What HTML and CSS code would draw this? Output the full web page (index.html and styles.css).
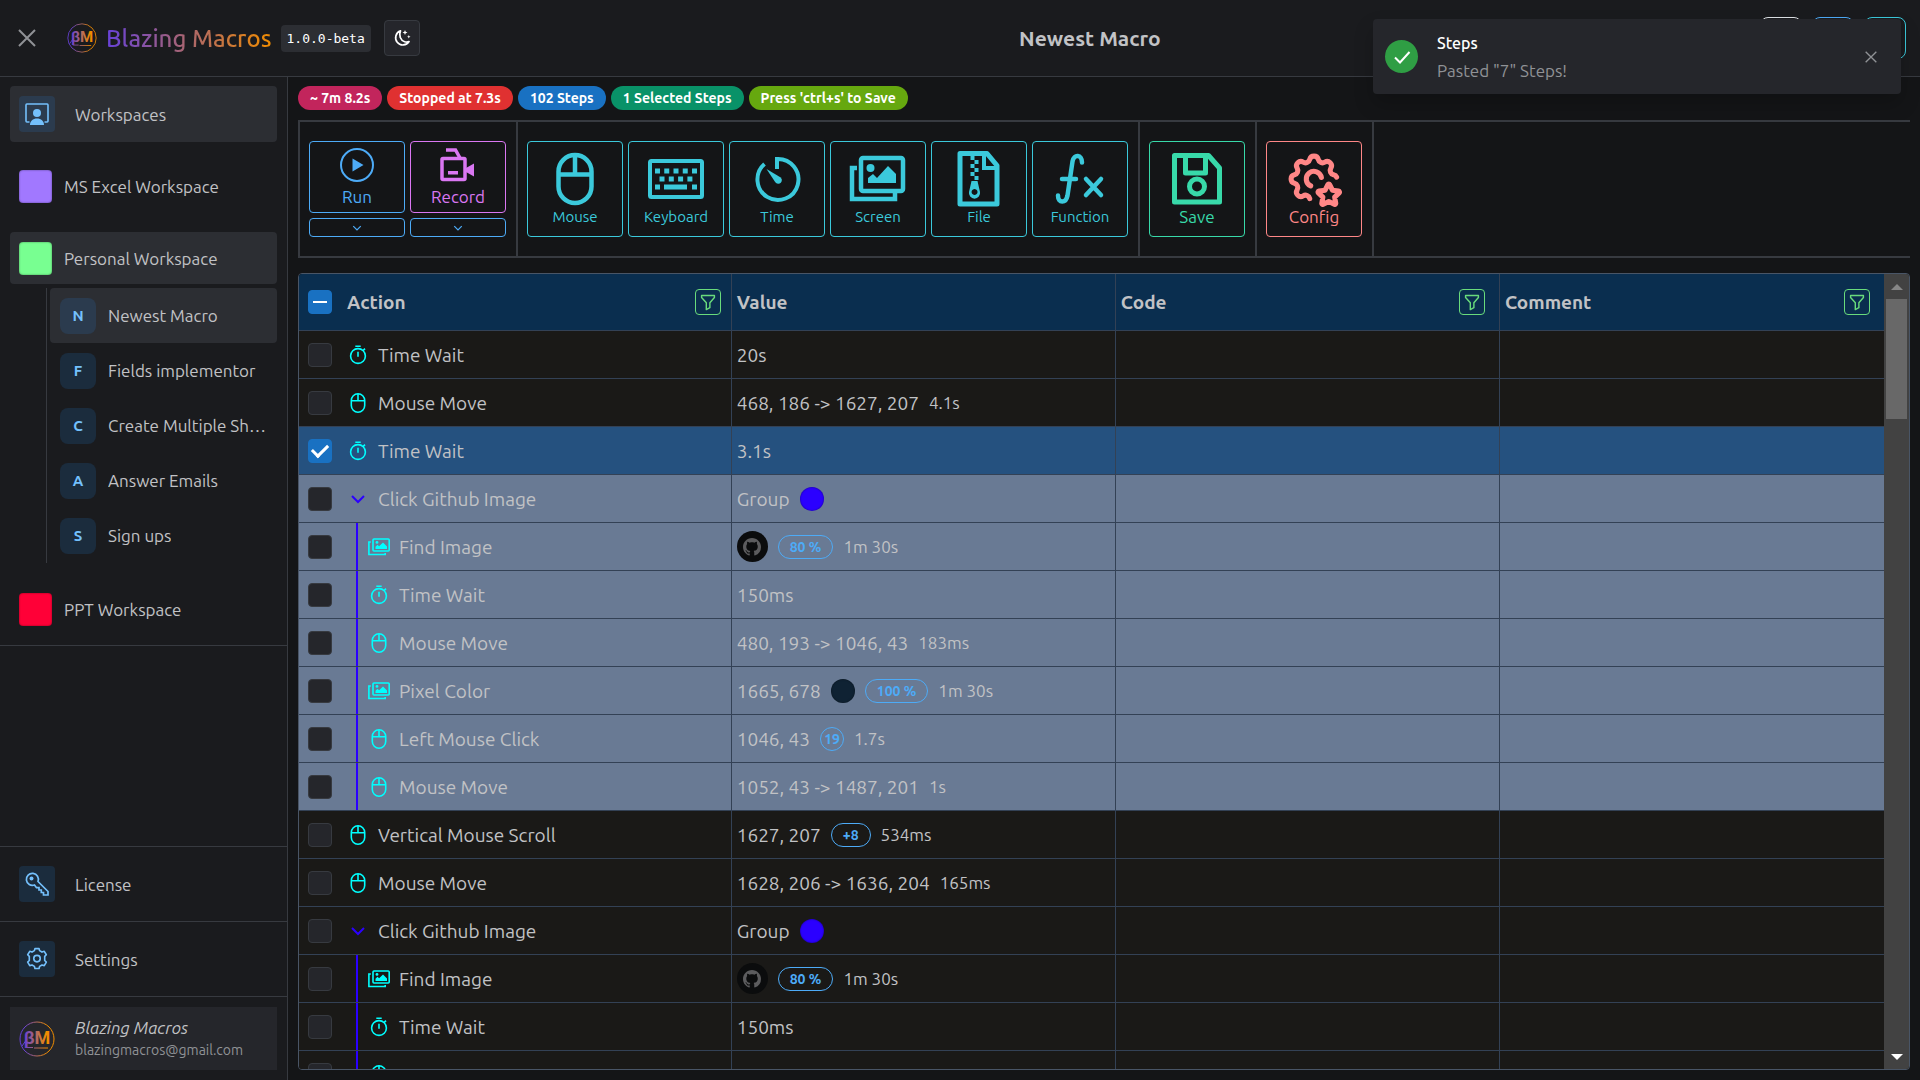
FILE: index.html
```html
<!DOCTYPE html>
<html lang="en">
<head>
  <meta charset="UTF-8" />
  <meta name="viewport" content="width=device-width, initial-scale=1.0"/>
  <title>Blazing Macros</title>
  <link rel="stylesheet" href="styles.css">
</head>
<body>
  <svg class="sprite" aria-hidden="true">
    <defs>
      <linearGradient id="brand-gradient" gradientUnits="userSpaceOnUse" x1="2" y1="0" x2="34" y2="0">
        <stop offset="0.1" stop-color="#6741d9"/>
        <stop offset="0.8" stop-color="#f08c00"/>
      </linearGradient>
    </defs>
    <symbol id="i-close" viewBox="0 0 18 18"><path d="M1 1l16 16M17 1L1 17" fill="none" stroke="currentColor" stroke-width="2"/></symbol>
    <symbol id="i-down" viewBox="0 0 16 16"><path d="M2 5l6 6 6-6" fill="none" stroke="currentColor" stroke-width="2"/></symbol>
    <symbol id="i-mouse" viewBox="0 0 20 20"><g fill="none" stroke="currentColor" stroke-width="1.6"><rect x="3.3" y="0.8" width="13.4" height="18.4" rx="6.7"/><path d="M3.3 7.7h13.4M10 0.8v6.9"/></g></symbol>
    <symbol id="i-watch" viewBox="0 0 20 20"><g fill="none" stroke="currentColor" stroke-width="1.6"><circle cx="10" cy="11" r="7.4"/><path d="M7.3 1.2h5.4M10 6.8v5M15 5.6l2-2"/></g></symbol>
    <symbol id="i-images" viewBox="0 0 22 20"><g fill="none" stroke="currentColor" stroke-width="1.6"><rect x="5" y="2" width="16.2" height="12" rx="1"/><path d="M2.8 5H.9v12.5h16.3v-1.6"/></g><circle cx="9" cy="5.4" r="1.4" fill="currentColor"/><path d="M7.5 12V9.8l2-2 1.6 1.4L15 5.4l4 4V12z" fill="currentColor"/></symbol>
    <symbol id="i-filter" viewBox="0 0 16 18"><path d="M1.2 1.5h13.6v2.2L10 9.3v5.2L6.2 16.5V9.3L1.2 3.7z" fill="none" stroke="currentColor" stroke-width="1.5" stroke-linejoin="round"/></symbol>
    <symbol id="i-github" viewBox="0 0 16 16"><path fill="currentColor" d="M8 0C3.58 0 0 3.58 0 8c0 3.54 2.29 6.53 5.47 7.59.4.07.55-.17.55-.38 0-.19-.01-.82-.01-1.49-2.01.37-2.53-.49-2.69-.94-.09-.23-.48-.94-.82-1.13-.28-.15-.68-.52-.01-.53.63-.01 1.08.58 1.23.82.72 1.21 1.87.87 2.33.66.07-.52.28-.87.51-1.07-1.78-.2-3.64-.89-3.64-3.95 0-.87.31-1.59.82-2.15-.08-.2-.36-1.02.08-2.12 0 0 .67-.21 2.2.82.64-.18 1.32-.27 2-.27s1.36.09 2 .27c1.53-1.04 2.2-.82 2.2-.82.44 1.1.16 1.92.08 2.12.51.56.82 1.27.82 2.15 0 3.07-1.87 3.75-3.65 3.95.29.25.54.73.54 1.48 0 1.07-.01 1.93-.01 2.2 0 .21.15.46.55.38A8.01 8.01 0 0016 8c0-4.42-3.58-8-8-8z"/></symbol>
  </svg>

  <header class="header">
    <div class="header-left">
      <button class="icon-btn" aria-label="Close menu"><svg class="close-lg"><use href="#i-close"/></svg></button>
      <svg class="logo-sm" viewBox="0 0 36 36">
        <circle cx="18" cy="18" r="17" fill="none" stroke="url(#brand-gradient)" stroke-width="1"/>
        <text x="18" y="23" text-anchor="middle" class="logo-text" fill="url(#brand-gradient)">βM</text>
        <path d="M7 26.5h7M15 27h14M3 25l5-7" stroke="url(#brand-gradient)" stroke-width="1" fill="none"/>
      </svg>
      <span class="brand">Blazing Macros</span>
      <code class="version">1.0.0-beta</code>
      <button class="theme-btn" aria-label="Toggle theme">
        <svg viewBox="0 0 18 18" width="18" height="18"><path d="M7.500 1.800a7.300 7.300 0 1 0 8.600 10.800c-1.500.6-3 .6-4.500.1C7.500 11.300 5.500 6.500 7.500 1.800z" fill="none" stroke="currentColor" stroke-width="1.700" stroke-linejoin="round"/><path d="M12 1l.7 1.800 1.800.7-1.800.7L12 6l-.7-1.800-1.800-.7 1.800-.7zM15.800 6l.5 1.200 1.200.5-1.200.5-.5 1.200-.5-1.200-1.200-.5 1.200-.5z" fill="currentColor"/></svg>
      </button>
    </div>
    <h1 class="title">Newest Macro</h1>
    <div class="header-right">
      <button class="win-btn white" aria-label="Minimize"></button>
      <button class="win-btn blue" aria-label="Maximize"></button>
      <button class="win-btn cyan" aria-label="Help"></button>
    </div>
  </header>

  <div class="layout">
    <aside class="sidebar">
      <nav class="nav">
        <button class="nav-item tall active">
          <span class="tile"><svg viewBox="0 0 24 24" width="24" height="24"><path d="M4.500 20H1.900A.9.9 0 0 1 1 19.100V2.900A.9.9 0 0 1 1.900 2h20.200a.9.9 0 0 1 .9.9v16.200a.9.9 0 0 1-.9.9h-2.600" fill="none" stroke="currentColor" stroke-width="1.600"/><circle cx="12" cy="11" r="4" fill="currentColor"/><path d="M5 23c0-4 3-6.500 7-6.500s7 2.500 7 6.500z" fill="currentColor"/></svg></span>
          Workspaces
        </button>
        <button class="nav-item first"><span class="swatch purple"></span>MS Excel Workspace</button>
        <button class="nav-item active"><span class="swatch green"></span>Personal Workspace</button>
        <div class="macros">
          <button class="macro active"><span class="tile round">N</span><span class="macro-name">Newest Macro</span></button>
          <button class="macro"><span class="tile round">F</span><span class="macro-name">Fields implementor</span></button>
          <button class="macro"><span class="tile round">C</span><span class="macro-name">Create Multiple Shortcuts</span></button>
          <button class="macro"><span class="tile round">A</span><span class="macro-name">Answer Emails</span></button>
          <button class="macro"><span class="tile round">S</span><span class="macro-name">Sign ups</span></button>
        </div>
        <button class="nav-item"><span class="swatch red"></span>PPT Workspace</button>
      </nav>

      <div class="side-section">
        <button class="nav-item tall">
          <span class="tile"><svg viewBox="0 0 24 24" width="24" height="24"><path d="M13 9.500L23 19.500V23h-4.500v-2.500h-2.200V18H14v-2.300h-2.500L9.500 13A6 6 0 1 1 13 9.500z" fill="none" stroke="currentColor" stroke-width="1.700"/><circle cx="6.500" cy="6.500" r="2" fill="currentColor"/></svg></span>
          License
        </button>
      </div>
      <div class="side-section">
        <button class="nav-item tall">
          <span class="tile"><svg viewBox="0 0 24 24" width="26" height="26"><g fill="none" stroke="currentColor" stroke-width="1.500" stroke-linejoin="round"><path d="M9.600 4.300L10.100 2.400h3.800l.5 1.900 2.200 1.300 2.100-.7 1.900 3.200-1.500 1.500v3.800l1.500 1.500-1.900 3.200-2.100-.6-2.200 1.300-.5 2h-3.800l-.5-2-2.200-1.300-2.100.6-1.900-3.200 1.500-1.500V9.600L3.400 8.100l1.900-3.200 2.100.7z"/><circle cx="12" cy="11.600" r="3"/></g></svg></span>
          Settings
        </button>
      </div>
      <div class="side-section user-section">
        <div class="user">
          <svg class="logo-lg" viewBox="0 0 36 36">
            <circle cx="18" cy="18" r="17" fill="none" stroke="url(#brand-gradient)" stroke-width="1"/>
            <text x="18" y="23" text-anchor="middle" class="logo-text" fill="url(#brand-gradient)">βM</text>
            <path d="M7 26.500h7M15 27h14M3 25l5-7" stroke="url(#brand-gradient)" stroke-width="1" fill="none"/>
          </svg>
          <div>
            <div class="user-name">Blazing Macros</div>
            <div class="user-mail">blazingmacros@gmail.com</div>
          </div>
        </div>
      </div>
    </aside>

    <main class="main">
      <div class="badges">
        <span class="badge pink">~ 7m 8.2s</span>
        <span class="badge red">Stopped at 7.3s</span>
        <span class="badge blue">102 Steps</span>
        <span class="badge teal">1 Selected Steps</span>
        <span class="badge lime">Press 'ctrl+s' to Save</span>
      </div>

      <div class="toolbar">
        <div class="tools">
          <div class="split">
            <button class="tool run">
              <svg viewBox="0 0 34 34" width="34" height="34"><circle cx="17" cy="17" r="16" fill="none" stroke="currentColor" stroke-width="2"/><path d="M12.500 10.500v13l11-6.500z" fill="currentColor"/></svg>
              Run
            </button>
            <button class="drop" aria-label="Run options"><svg><use href="#i-down"/></svg></button>
          </div>
          <div class="split">
            <button class="tool record">
              <svg viewBox="0 0 38 34" width="38" height="34"><g fill="none" stroke="currentColor" stroke-width="3.500"><rect x="3" y="10.500" width="23" height="21" rx="1"/><path d="M7 2h9.500l4.500 8"/></g><path d="M9 23h10v3.500H9zM27 20l8-4.500v13L27 24z" fill="currentColor"/></svg>
              Record
            </button>
            <button class="drop" aria-label="Record options"><svg><use href="#i-down"/></svg></button>
          </div>
        </div>
        <div class="tools">
          <button class="tool cyan"><svg viewBox="0 0 56 56" width="56" height="56"><g fill="none" stroke="currentColor" stroke-width="4.500"><rect x="11.500" y="4" width="33" height="48" rx="16.500"/><path d="M11.500 23.500h33M28 4v19"/></g></svg>Mouse</button>
          <button class="tool cyan"><svg viewBox="0 0 56 56" width="56" height="56"><rect x="2" y="10" width="52" height="36" rx="1.500" fill="none" stroke="currentColor" stroke-width="4"/><g fill="none" stroke="currentColor" stroke-width="5"><path d="M7 20h42" stroke-dasharray="5 4.250"/><path d="M11.500 28h33" stroke-dasharray="5 4.300"/><path d="M7 36h5M16 36h23M44 36h5"/></g></svg>Keyboard</button>
          <button class="tool cyan"><svg viewBox="0 0 56 56" width="56" height="56"><path d="M15.500 13A20.500 20.500 0 1 0 28 8v10" fill="none" stroke="currentColor" stroke-width="4"/><path d="M17.500 18l13.800 8.200a3.600 3.600 0 1 1-5 5z" fill="currentColor"/></svg>Time</button>
          <button class="tool cyan"><svg viewBox="0 0 60 56" width="60" height="56"><g fill="none" stroke="currentColor" stroke-width="4.500"><rect x="13" y="7" width="42" height="33" rx="2"/><path d="M9 17H4v31h43v-6"/></g><circle cx="22.500" cy="17" r="4" fill="currentColor"/><path d="M20 32v-5l5-4 4 4 11-12 8 8v9z" fill="currentColor"/></svg>Screen</button>
          <button class="tool cyan"><svg viewBox="0 0 56 56" width="56" height="56"><path d="M9 2.500h27l10 12V53H9z" fill="none" stroke="currentColor" stroke-width="5" stroke-linejoin="round"/><path d="M33 4v13h13" fill="none" stroke="currentColor" stroke-width="4"/><g stroke="currentColor" stroke-width="4"><path d="M21.500 5v22" stroke-dasharray="4 4"/><path d="M25.500 9v22" stroke-dasharray="4 4"/></g><path d="M20.500 30h6l2.500 11a5.600 5.600 0 1 1-11 0zM23.500 38a3 3 0 1 0 .1 0z" fill="currentColor" fill-rule="evenodd"/></svg>File</button>
          <button class="tool cyan"><svg viewBox="0 0 56 56" width="56" height="56"><path d="M6 44.500c0 8 8 8 9.500 0l5-34c1.500-8 9.500-7 9.500 1M10 28h14M34 28l15 16M49 28L34 44" fill="none" stroke="currentColor" stroke-width="4.500" stroke-linecap="round" stroke-linejoin="round"/></svg>Function</button>
        </div>
        <div class="tools">
          <button class="tool save"><svg viewBox="0 0 56 56" width="56" height="56"><g fill="none" stroke="currentColor" stroke-width="5" stroke-linejoin="round"><path d="M5.500 4.500h34L50.500 17v34h-45z"/><path d="M16.500 6v16h20V6"/><circle cx="28" cy="35.500" r="7.500"/></g></svg>Save</button>
        </div>
        <div class="tools">
          <button class="tool config"><svg viewBox="1 1 22 22" width="56" height="56"><g fill="none" stroke="currentColor" stroke-width="2" stroke-linecap="round" stroke-linejoin="round"><path d="M10.325 19.683a1.723 1.723 0 0 0-2.572-1.065c-1.543.94-3.310-.826-2.370-2.370a1.724 1.724 0 0 0-1.065-2.572c-1.756-.426-1.756-2.924 0-3.350a1.724 1.724 0 0 0 1.066-2.573c-.94-1.543.826-3.310 2.370-2.370 1 .608 2.296.07 2.572-1.065.426-1.756 2.924-1.756 3.350 0a1.724 1.724 0 0 0 2.573 1.066c1.543-.94 3.310.826 2.370 2.370a1.724 1.724 0 0 0 1.065 2.572c.6.140 1 .5 1.200.95"/><path d="M14.900 11.400a3 3 0 1 0-4.200 3.300"/><path d="M17.800 20.817l-2.172 1.138a.392.392 0 0 1-.568-.41l.415-2.411-1.757-1.707a.389.389 0 0 1 .217-.665l2.428-.352 1.086-2.193a.392.392 0 0 1 .702 0l1.086 2.193 2.428.352a.39.39 0 0 1 .217.665l-1.757 1.707.414 2.410a.39.39 0 0 1-.567.411z"/></g></svg>Config</button>
        </div>
      </div>

      <div class="table-box">
        <table class="steps">
          <thead>
            <tr>
              <th class="col-action"><div class="head"><input type="checkbox" class="check mixed" aria-label="Select all steps"><span>Action</span><button class="filter" aria-label="Filter action"><svg><use href="#i-filter"/></svg></button></div></th>
              <th><div class="head">Value</div></th>
              <th><div class="head">Code<button class="filter" aria-label="Filter code"><svg><use href="#i-filter"/></svg></button></div></th>
              <th><div class="head">Comment<button class="filter" aria-label="Filter comment"><svg><use href="#i-filter"/></svg></button></div></th>
            </tr>
          </thead>
          <tbody>
            <tr>
              <td><label class="action"><input type="checkbox" class="check"><svg class="icon"><use href="#i-watch"/></svg>Time Wait</label></td>
              <td><div class="value">20s</div></td><td></td><td></td>
            </tr>
            <tr>
              <td><label class="action"><input type="checkbox" class="check"><svg class="icon"><use href="#i-mouse"/></svg>Mouse Move</label></td>
              <td><div class="value">468, 186 -&gt; 1627, 207<small>4.1s</small></div></td><td></td><td></td>
            </tr>
            <tr class="selected">
              <td><label class="action"><input type="checkbox" class="check" checked><svg class="icon"><use href="#i-watch"/></svg>Time Wait</label></td>
              <td><div class="value">3.1s</div></td><td></td><td></td>
            </tr>
            <tr class="pasted">
              <td><label class="action"><input type="checkbox" class="check"><svg class="icon group"><use href="#i-down"/></svg>Click Github Image</label></td>
              <td><div class="value">Group<span class="dot violet"></span></div></td><td></td><td></td>
            </tr>
            <tr class="pasted">
              <td><label class="action nested"><input type="checkbox" class="check"><svg class="icon"><use href="#i-images"/></svg>Find Image</label></td>
              <td><div class="value"><span class="thumb"><svg><use href="#i-github"/></svg></span><span class="pill">80 %</span><small>1m 30s</small></div></td><td></td><td></td>
            </tr>
            <tr class="pasted">
              <td><label class="action nested"><input type="checkbox" class="check"><svg class="icon"><use href="#i-watch"/></svg>Time Wait</label></td>
              <td><div class="value">150ms</div></td><td></td><td></td>
            </tr>
            <tr class="pasted">
              <td><label class="action nested"><input type="checkbox" class="check"><svg class="icon"><use href="#i-mouse"/></svg>Mouse Move</label></td>
              <td><div class="value">480, 193 -&gt; 1046, 43<small>183ms</small></div></td><td></td><td></td>
            </tr>
            <tr class="pasted">
              <td><label class="action nested"><input type="checkbox" class="check"><svg class="icon"><use href="#i-images"/></svg>Pixel Color</label></td>
              <td><div class="value">1665, 678<span class="dot navy"></span><span class="pill">100 %</span><small>1m 30s</small></div></td><td></td><td></td>
            </tr>
            <tr class="pasted">
              <td><label class="action nested"><input type="checkbox" class="check"><svg class="icon"><use href="#i-mouse"/></svg>Left Mouse Click</label></td>
              <td><div class="value">1046, 43<span class="pill circle">19</span><small>1.7s</small></div></td><td></td><td></td>
            </tr>
            <tr class="pasted">
              <td><label class="action nested"><input type="checkbox" class="check"><svg class="icon"><use href="#i-mouse"/></svg>Mouse Move</label></td>
              <td><div class="value">1052, 43 -&gt; 1487, 201<small>1s</small></div></td><td></td><td></td>
            </tr>
            <tr>
              <td><label class="action"><input type="checkbox" class="check"><svg class="icon"><use href="#i-mouse"/></svg>Vertical Mouse Scroll</label></td>
              <td><div class="value">1627, 207<span class="pill">+8</span><small>534ms</small></div></td><td></td><td></td>
            </tr>
            <tr>
              <td><label class="action"><input type="checkbox" class="check"><svg class="icon"><use href="#i-mouse"/></svg>Mouse Move</label></td>
              <td><div class="value">1628, 206 -&gt; 1636, 204<small>165ms</small></div></td><td></td><td></td>
            </tr>
            <tr>
              <td><label class="action"><input type="checkbox" class="check"><svg class="icon group"><use href="#i-down"/></svg>Click Github Image</label></td>
              <td><div class="value">Group<span class="dot violet"></span></div></td><td></td><td></td>
            </tr>
            <tr>
              <td><label class="action nested"><input type="checkbox" class="check"><svg class="icon"><use href="#i-images"/></svg>Find Image</label></td>
              <td><div class="value"><span class="thumb"><svg><use href="#i-github"/></svg></span><span class="pill">80 %</span><small>1m 30s</small></div></td><td></td><td></td>
            </tr>
            <tr>
              <td><label class="action nested"><input type="checkbox" class="check"><svg class="icon"><use href="#i-watch"/></svg>Time Wait</label></td>
              <td><div class="value">150ms</div></td><td></td><td></td>
            </tr>
            <tr>
              <td><label class="action nested"><input type="checkbox" class="check"><svg class="icon"><use href="#i-mouse"/></svg>Mouse Move</label></td>
              <td><div class="value">480, 193 -&gt; 1046, 43<small>183ms</small></div></td><td></td><td></td>
            </tr>
          </tbody>
        </table>
        <div class="scrollbar">
          <span class="arrow up"></span>
          <span class="thumb-bar"></span>
          <span class="arrow down"></span>
        </div>
      </div>
    </main>
  </div>

  <div class="toast" role="alert">
    <span class="toast-icon"><svg viewBox="0 0 18 18" width="18" height="18"><path d="M2 9.500L7 14.500 16.500 4" fill="none" stroke="currentColor" stroke-width="2"/></svg></span>
    <div class="toast-body">
      <div class="toast-title">Steps</div>
      <div class="toast-text">Pasted "7" Steps!</div>
    </div>
    <button class="icon-btn" aria-label="Dismiss"><svg class="close-sm"><use href="#i-close"/></svg></button>
  </div>
</body>
</html>
```
FILE: styles.css
```css
* {
  box-sizing: border-box;
}
body {
  margin: 0;
  height: 100vh;
  display: flex;
  flex-direction: column;
  overflow: hidden;
  font-family: Ubuntu, "Noto Sans", sans-serif;
  font-size: 17px;
  color: #c1c2c5;
  background: #141517;
}
button {
  font: inherit;
  color: inherit;
  background: none;
  border: none;
  padding: 0;
  cursor: pointer;
}
svg {
  flex: none;
  display: block;
}
.sprite {
  position: absolute;
  width: 0;
  height: 0;
}

/* header */
.header {
  flex: none;
  height: 77px;
  padding: 0 14px 0 18px;
  display: flex;
  align-items: center;
  justify-content: space-between;
  background: #1a1b1e;
  border-bottom: 1px solid #373a40;
}
.header-left, .header-right {
  display: flex;
  align-items: center;
  gap: 10px;
}
.header-left {
  gap: 9px;
}
.icon-btn {
  color: #909296;
}
.close-lg {
  width: 18px;
  height: 18px;
}
.close-sm {
  width: 12px;
  height: 12px;
}
.logo-sm {
  width: 30px;
  height: 30px;
  margin-left: 22px;
}
.logo-lg {
  width: 36px;
  height: 36px;
}
.logo-text {
  font: bold 18px Roboto, sans-serif;
}
.brand {
  font-size: 24px;
  font-weight: 500;
  background: linear-gradient(90deg, #6741d9, #f08c00);
  -webkit-background-clip: text;
  background-clip: text;
  color: transparent;
}
.version {
  font: 13px/27px "DejaVu Sans Mono", monospace;
  color: #fff;
  background: #2c2e33;
  border-radius: 4px;
  padding: 0 6px;
}
.theme-btn {
  width: 36px;
  height: 36px;
  margin-left: 4px;
  display: flex;
  align-items: center;
  justify-content: center;
  color: #fff;
  background: #25262b;
  border: 1px solid #373a40;
  border-radius: 4px;
}
.title {
  margin: 0;
  font-size: 21px;
  font-weight: 600;
}
.win-btn {
  width: 42px;
  height: 42px;
  border: 1px solid;
  border-radius: 8px;
}
.win-btn.white { color: #dee2e6; }
.win-btn.blue { color: #4dabf7; }
.win-btn.cyan { color: #3bc9db; }

/* sidebar */
.layout {
  flex: 1;
  min-height: 0;
  display: flex;
}
.sidebar {
  flex: none;
  width: 288px;
  display: flex;
  flex-direction: column;
  background: #1a1b1e;
  border-right: 1px solid #373a40;
}
.nav {
  padding: 9px 10px 10px;
  margin-bottom: auto;
  display: flex;
  flex-direction: column;
  gap: 20px;
  border-bottom: 1px solid #373a40;
}
.nav-item {
  width: 100%;
  height: 52px;
  padding: 0 9px;
  display: flex;
  align-items: center;
  gap: 12px;
  border-radius: 4px;
}
.nav-item.first {
  margin-top: -2px;
}
.nav-item.tall {
  height: 56px;
  gap: 20px;
}
.nav-item.active, .macro.active {
  background: #2c2e33;
}
.tile {
  flex: none;
  width: 36px;
  height: 36px;
  display: flex;
  align-items: center;
  justify-content: center;
  font-size: 15px;
  font-weight: bold;
  color: #74c0fc;
  background: #1b2c3d;
  border-radius: 4px;
}
.active > .tile {
  background: #2b3b4e;
}
.tile.round {
  border-radius: 8px;
}
.swatch {
  width: 33px;
  height: 33px;
  border-radius: 4px;
  box-shadow: inset 0 0 2px rgba(0, 0, 0, 0.5);
}
.swatch.purple { background: #a178ff; }
.swatch.green { background: #78ff91; }
.swatch.red { background: #ff0037; }
.macros {
  margin-top: -16px;
  margin-left: 36px;
  padding-left: 3px;
  border-left: 1px solid #373a40;
}
.macro {
  width: 100%;
  height: 55px;
  padding: 0 10px;
  display: flex;
  align-items: center;
  gap: 12px;
  border-radius: 4px;
}
.macro-name {
  overflow: hidden;
  text-overflow: ellipsis;
  white-space: nowrap;
}
.side-section {
  padding: 9px 10px;
  border-top: 1px solid #373a40;
}
.user-section {
  padding: 10px;
}
.user {
  height: 63px;
  padding: 0 9px;
  display: flex;
  align-items: center;
  gap: 20px;
  background: #25262b;
}
.user-name {
  line-height: 22px;
  font-style: italic;
}
.user-mail {
  font-size: 14px;
  line-height: 22px;
  color: #909296;
}

/* main */
.main {
  flex: 1;
  min-width: 0;
  padding: 9px 10px 10px;
  display: flex;
  flex-direction: column;
}
.badges {
  display: flex;
  gap: 5px;
  margin-bottom: 10px;
}
.badge {
  height: 24px;
  padding: 0 12px;
  border-radius: 12px;
  font-size: 14px;
  line-height: 24px;
  font-weight: bold;
  color: #fff;
}
.badge.pink { background: #c2255c; }
.badge.red { background: #e03131; }
.badge.blue { background: #1971c2; }
.badge.teal { background: #099268; }
.badge.lime { background: #66a80f; }

.toolbar {
  flex: none;
  display: flex;
  margin-bottom: 15px;
  border: 2px solid #373a40;
  border-right: none;
}
.tools {
  display: flex;
  gap: 5px;
  padding: 19px 10px 19px 9px;
  border-right: 2px solid #373a40;
}
.split {
  display: flex;
  flex-direction: column;
  gap: 5px;
}
.tool {
  width: 96px;
  height: 96px;
  display: flex;
  flex-direction: column;
  align-items: center;
  justify-content: center;
  font-size: 15px;
  line-height: 20px;
  border: 1px solid;
  border-radius: 4px;
}
.tool.run, .tool.record {
  height: 72px;
  gap: 5px;
  font-size: 17px;
}
.tool.run { color: #4dabf7; }
.tool.record { color: #da77f2; }
.tool.cyan { color: #3bc9db; }
.tool.save { color: #38d9a9; }
.tool.config { color: #ff8787; }
.tool.save, .tool.config {
  font-size: 17px;
}
.drop {
  height: 19px;
  display: flex;
  align-items: center;
  justify-content: center;
  color: #4dabf7;
  border: 1px solid;
  border-radius: 4px;
}
.drop svg {
  width: 10px;
  height: 10px;
}

/* steps table */
.table-box {
  flex: 1;
  min-height: 0;
  display: flex;
  align-items: flex-start;
  overflow: hidden;
  border: 1px solid #495566;
  border-radius: 4px;
}
.steps {
  width: 100%;
  table-layout: fixed;
  border-collapse: separate;
  border-spacing: 0;
  background: #1a1917;
  font-size: 19px;
}
.steps th, .steps td {
  padding: 0;
  border-right: 1px solid #334155;
  border-bottom: 1px solid #334155;
}
.steps th:last-child, .steps td:last-child {
  border-right: none;
}
.steps th {
  background: #0a2e4f;
  text-align: left;
  font-weight: 600;
}
.steps .col-action {
  width: 27.3%;
}
.head {
  height: 56px;
  display: flex;
  align-items: center;
  padding: 0 14px 0 5px;
}
.col-action .head {
  gap: 15px;
  padding: 0 10px 0 9px;
}
.filter {
  width: 26px;
  height: 26px;
  margin-left: auto;
  display: flex;
  align-items: center;
  justify-content: center;
  color: #69db7c;
  border: 1px solid;
  border-radius: 4px;
}
.filter svg {
  width: 16px;
  height: 17px;
}
.check {
  appearance: none;
  flex: none;
  width: 24px;
  height: 24px;
  margin: 0;
  display: grid;
  place-items: center;
  background: #25262b;
  border: 1px solid #373a40;
  border-radius: 4px;
}
.check:checked, .check.mixed {
  background: #1971c2;
  border-color: #1971c2;
}
.check:checked::before {
  content: "";
  width: 13px;
  height: 7px;
  margin-bottom: 4px;
  border: solid #fff;
  border-width: 0 0 3px 3px;
  transform: rotate(-45deg);
}
.check.mixed::before {
  content: "";
  width: 14px;
  height: 2px;
  background: #fff;
}
.selected td { background: #25517f; }
.pasted td { background: #697a94; }
.action {
  height: 47px;
  padding-left: 9px;
  display: flex;
  align-items: center;
}
.icon {
  width: 20px;
  height: 20px;
  margin: 0 10px 0 16px;
  color: #00ffff;
}
.icon.group {
  width: 16px;
  height: 16px;
  margin: 0 12px 0 18px;
  color: #2b00ff;
}
/* guide line of the group the step belongs to */
.nested {
  background: linear-gradient(#2b00ff, #2b00ff) 57px 0 / 2px 100% no-repeat;
}
.nested .icon {
  width: 22px;
  margin: 0 9px 0 36px;
}
.value {
  height: 47px;
  padding-left: 5px;
  display: flex;
  align-items: center;
  gap: 10px;
  white-space: nowrap;
}
.value small {
  font-size: 17px;
}
.dot {
  width: 24px;
  height: 24px;
  border-radius: 50%;
  box-shadow: inset 0 0 2px rgba(0, 0, 0, 0.5);
}
.dot.violet { background: #2b00ff; }
.dot.navy { background: #0f2233; }
.thumb {
  width: 31px;
  height: 31px;
  display: flex;
  align-items: center;
  justify-content: center;
  color: #5c5c5e;
  background: #0b0c0d;
  border-radius: 50%;
}
.thumb svg {
  width: 18px;
  height: 18px;
}
.pill {
  height: 24px;
  padding: 0 11px;
  font-size: 14px;
  line-height: 22px;
  font-weight: bold;
  color: #4dabf7;
  border: 1px solid #4dabf7;
  border-radius: 12px;
}
.pill.circle {
  width: 24px;
  padding: 0;
  text-align: center;
}
.scrollbar {
  flex: none;
  width: 25px;
  align-self: stretch;
  display: flex;
  flex-direction: column;
  align-items: center;
  background: #424242;
}
.arrow {
  margin: 10px 0 9px;
  border: solid transparent;
  border-width: 0 6px;
}
.arrow.up { border-bottom: 6px solid #868686; }
.arrow.down {
  margin-top: auto;
  border-top: 6px solid #fff;
}
.thumb-bar {
  width: 21px;
  height: 120px;
  background: #686868;
}

/* notification */
.toast {
  position: absolute;
  top: 19px;
  right: 19px;
  width: 528px;
  height: 75px;
  padding: 0 24px 0 12px;
  display: flex;
  align-items: center;
  background: #25262b;
  border-radius: 4px;
  box-shadow: 0 10px 20px rgba(0, 0, 0, 0.2);
}
.toast-icon {
  width: 33px;
  height: 33px;
  display: flex;
  align-items: center;
  justify-content: center;
  color: #fff;
  background: #2f9e44;
  border-radius: 50%;
}
.toast-body {
  flex: 1;
  margin-left: 19px;
  line-height: 27px;
}
.toast-title {
  font-size: 16px;
  font-weight: 500;
  color: #fff;
}
.toast-text {
  color: #909296;
}
```
